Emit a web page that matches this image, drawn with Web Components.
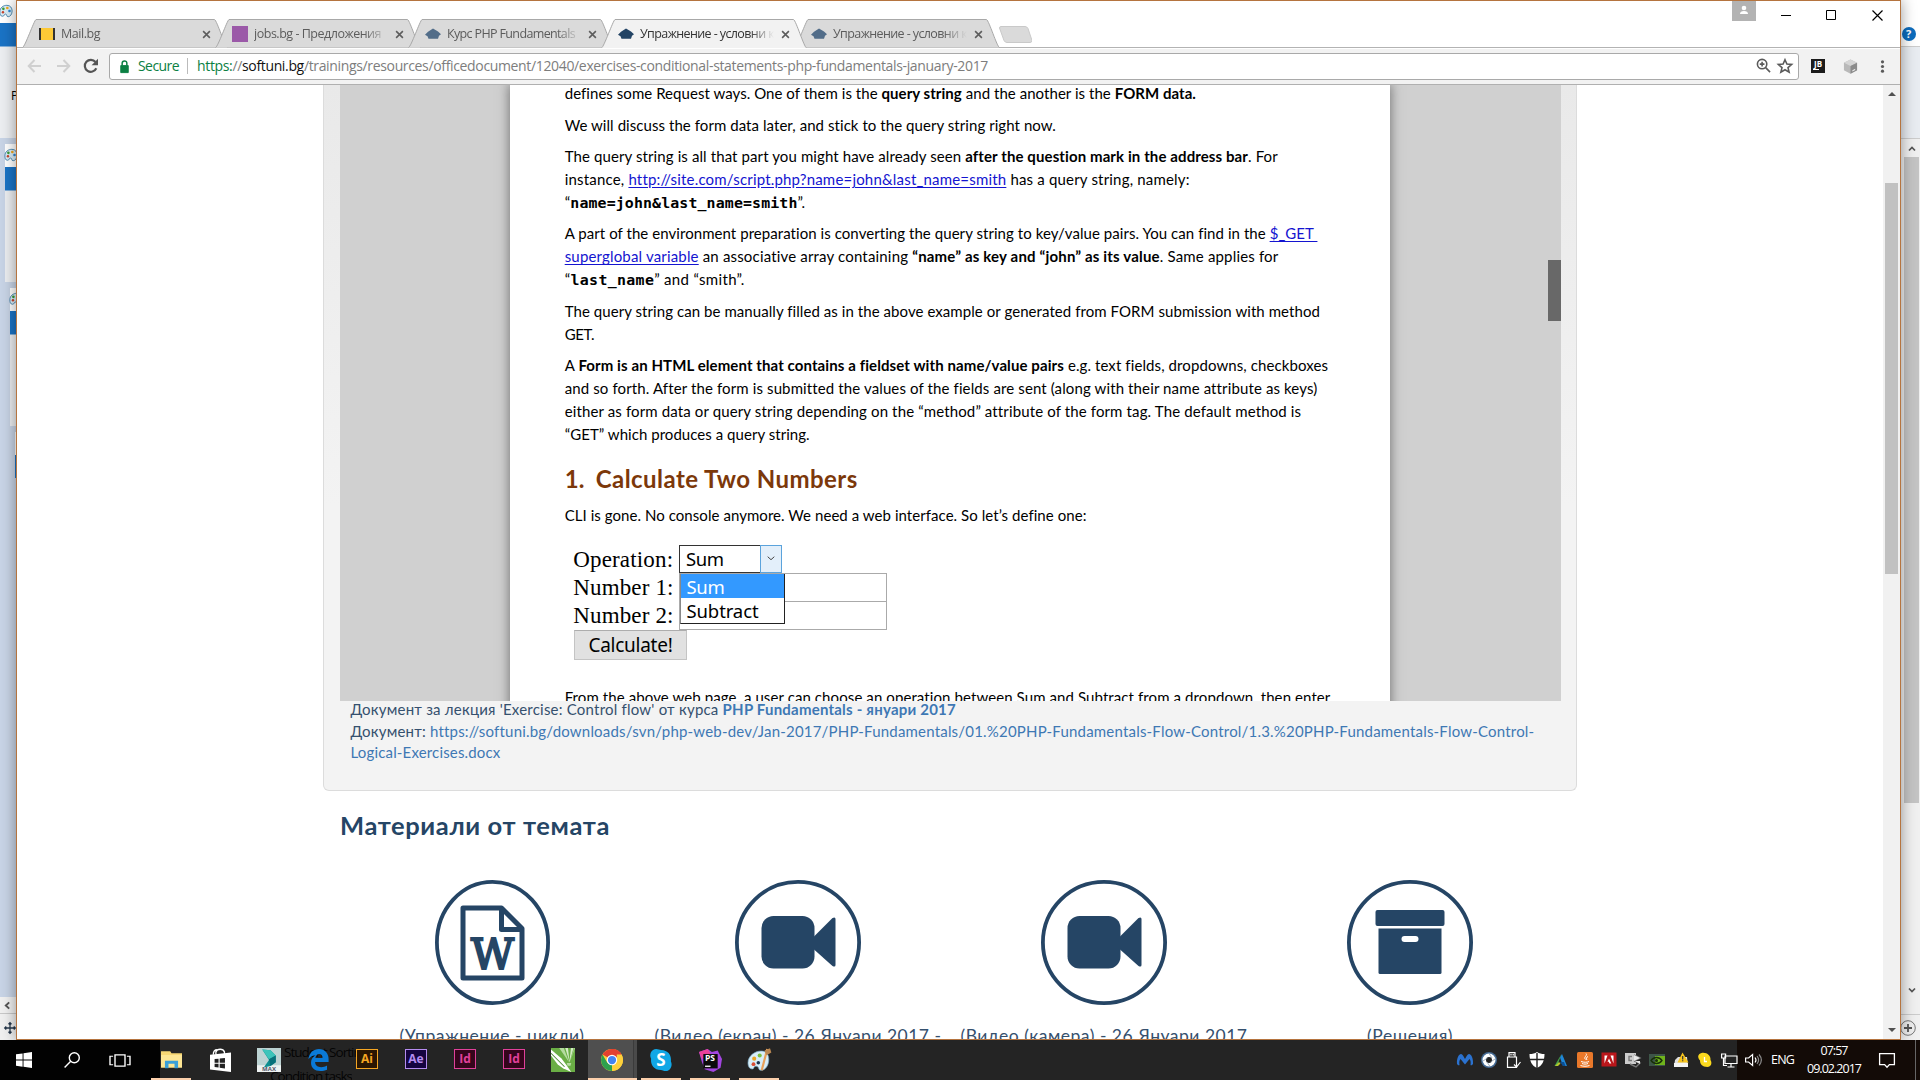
<!DOCTYPE html>
<html lang="bg">
<head>
<meta charset="utf-8">
<title>Упражнение - условни конструкции</title>
<style>
html,body{margin:0;width:1920px;height:1080px;overflow:hidden;background:#c3cfe2}
</style>
</head>
<body>
<desk-top></desk-top>
<script>
const define=(name,html,init)=>customElements.define(name,class extends HTMLElement{
  connectedCallback(){
    if(this.shadowRoot)return;
    const r=this.attachShadow({mode:'open'});
    r.innerHTML=typeof html==='function'?html(this):html;
    if(init)init(this,r);
  }
});

/* A single line of text whose tracking is adjusted to a given width. */
define('fit-line','<style>:host{display:block;white-space:pre}span{display:inline-block}</style><span><slot></slot></span>',(el,r)=>{
  const w=+el.getAttribute('w'),s=r.querySelector('span'),n=[...el.textContent].length;
  if(!w)return;
  const cur=s.getBoundingClientRect().width;
  s.style.letterSpacing=((w-cur)/n)+'px';
});

const P={
hat:'<path d="M8 2.500 13 5.500 16 8.200 14 9.800 13 12.800H3.500L2.500 10.300 0 8.800 3 5.800z"/>',
mail:'<rect width="16" height="12" y="2" fill="#fdc936"/><rect width="2" height="12" y="2" fill="#333"/><rect x="14" width="2" height="12" y="2" fill="#333"/>',
jobs:'<rect width="16" height="16" fill="#9b59a8"/>',
back:'<path d="M14 8H2M7.500 2 1.700 8l5.800 6" fill="none" stroke="#d0d0d0" stroke-width="2"/>',
fwd:'<path d="M2 8h12M8.500 2l5.800 6-5.800 6" fill="none" stroke="#d0d0d0" stroke-width="2"/>',
reload:'<path d="M13.300 10.300A6 6 0 1 1 12.500 4" fill="none" stroke="#555" stroke-width="2.200"/><path d="M15 .8v6.400H8.600z" fill="#555"/>',
lock:'<path d="M4 7h8v7.500H4z" fill="#0b8043" stroke="#0b8043" stroke-linejoin="round"/><path d="M5.500 7V4.500a2.500 2.500 0 0 1 5 0V7" fill="none" stroke="#0b8043" stroke-width="1.600"/>',
zoomin:'<g fill="none" stroke="#5a5a5a" stroke-width="1.700"><circle cx="6.500" cy="6.500" r="5"/><path d="m10.300 10.300 4.700 4.700M4 6.500h5M6.500 4v5" /></g>',
star:'<path d="m8 1.800 1.900 4.300 4.700.4-3.600 3.100 1.100 4.600L8 11.800l-4.100 2.400L5 9.600 1.400 6.500l4.700-.4z" fill="none" stroke="#5a5a5a" stroke-width="1.600"/>',
cube:'<path d="M8 .5 15 4v8l-7 3.800L1 12V4z" fill="#b9b9b9"/><path d="M8 .5 15 4 8 7.500 1 4z" fill="#d5d5d5"/><path d="M8 7.500 15 4v8l-7 3.800z" fill="#8b8b8b"/><path d="m10 12 3-1.500v1.200L10 13.200z" fill="#eee"/>',
dots:'<g fill="#5a5a5a"><circle cx="8" cy="3" r="1.700"/><circle cx="8" cy="8" r="1.700"/><circle cx="8" cy="13" r="1.700"/></g>',
palette:'<path d="M1 9C1 4 5 1.500 9 1.500s6 3 6 6.500-2 6.500-4.500 6.500-1-3-3-3-1 2.500-3.500 2.500S1 11.500 1 9z" fill="#d9edf7" stroke="#3f7fa8"/><circle cx="5" cy="5.500" r="1.500" fill="#3a9c3a"/><circle cx="9.500" cy="4.500" r="1.500" fill="#f0a81c"/><circle cx="4.500" cy="9.500" r="1.400" fill="#c9442c"/><circle cx="12" cy="8" r="1.500" fill="#2f86d0"/>',
start:'<path d="M0 2.300 6.600 1.400V7.600H0zM7.500 1.200 16 0v7.600H7.500zM0 8.500h6.600v6.200L0 13.800zM7.500 8.500H16V16l-8.500-1.200z" fill="#fff"/>',
search:'<g fill="none" stroke="#fff" stroke-width="1.400"><circle cx="10.300" cy="5.700" r="5"/><path d="M6.700 9.300.6 15.500"/></g>',
taskview:'<g fill="none" stroke="#fff" stroke-width="1.100"><path d="M4 2h8v12H4zM2.500 3.500H0v9h2.500M13.500 3.500H16v9h-2.500"/></g>',
explorer:'<path d="M0 1h7l1 1.500h8V14H0z" fill="#f7d774"/><path d="M0 4h16v10H0z" fill="#fde694"/><path d="M3 14.500V8.500h10v6h-2.700V11H5.700v3.500z" fill="#3aa0d8"/>',
store:'<path d="m0 4 16-1.500V16L0 14.200z" fill="#fff"/><path d="M4.500 4V2c1-2.500 5.500-2.500 6.500 0v1.500M2.500 4c0-2 1-3.500 3-3.500" fill="none" stroke="#fff"/><path d="m3.500 7 3-.3v2.800h-3zM7.400 6.600l4-.4v3.300h-4zM3.500 10.300h3v2.600l-3-.3zM7.400 10.300h4v3.300l-4-.5z" fill="#222"/>',
max:'<rect width="16" height="16" fill="#bcd3d3"/><rect y="11.500" width="16" height="4.500" fill="#eef2f2"/><path d="M3.500 1 9 1.500 12.500 5v4.500L9 12l-4.500 1L8 8z" fill="#0f8f90"/><path d="M3.500 1 9 1.500 12.500 5 8 7.500z" fill="#3cc4ba"/><path d="M8 7.500 12.500 5v4.500L9 12z" fill="#08707a"/>',
edge:'<path d="M.3 7.500C1 2.500 4.500 0 8.300 0 13 0 15.700 3.300 15.700 7.300v2.200H5.400c.2 2.800 2.200 3.700 4.600 3.700 1.700 0 3.200-.5 4.500-1.200v3C13 15.700 11.400 16 9.500 16 5 16 2.300 13.700 2.300 10c0-2.600 1.400-4.600 3.500-5.500C3.500 4.500 1.500 5.700.3 7.500zM5.600 6.600h5.500c0-2-1-3-2.600-3s-2.600 1.200-2.900 3z" fill="#0a7ad8"/>',
corel:'<rect width="16" height="16" fill="#6aae45"/><path d="M5.500 0h3L12 9.500zM15.500 0H16l-3.500 9.500z" fill="#b5dba0"/><path d="M9.500 0h5.500l-2.600 9.500z" fill="#d4ecc6"/><path d="M11.300 0h2l-1 9z" fill="#6aae45"/><path d="M10.500 10h3l-.5 1.800h-2z" fill="#b5dba0"/><path d="M0 1 7 7l3 4 3.500 5L8 13.500 4.500 11 0 5z" fill="#fff"/><path d="M0 3.500 9 12.500" stroke="#4b8a33" stroke-width=".7"/>',
chrome:'<circle cx="8" cy="8" r="8" fill="#fdd03b"/><path d="M8 8 1.100 4A8 8 0 0 1 14.900 4z" fill="#e3412f"/><path d="M8 0a8 8 0 0 1 6.900 4H8z" fill="#e3412f"/><path d="M1.100 4 4.600 10 8 11.500 8 16A8 8 0 0 1 1.100 4z" fill="#2da14d"/><path d="M14.900 4A8 8 0 0 1 8 16l3.500-6L11.500 4z" fill="#fdd03b"/><circle cx="8" cy="8" r="3.800" fill="#fff"/><circle cx="8" cy="8" r="3" fill="#4484f0"/>',
skype:'<path d="M4.500 0C6 0 7 .6 8 .8c5 0 7.800 3.800 7.200 8.200 1.500 3-.3 7-4 7-1.300 0-2.300-.7-3.200-.8C3 15.200.2 11.500.8 7-.8 4 1 0 4.500 0z" fill="#11a7e6"/>',
pstorm:'<path d="m0 2 6-2 3 2 4-1 3 6-1 6-5 3-6-2-2-5z" fill="#a345e0"/><path d="m0 2 6-2 2 3-6 4z" fill="#e8409a"/><path d="M3 3.500h10v10H3z" fill="#0b0b0b"/><path d="M4.200 12h3.800" stroke="#fff" stroke-width=".9"/>',
paint:'<path d="M0 10C0 5 5 1.500 9.500 1.500S15.500 5 15 9s-3 6.500-5.500 6.500-1-3-3.500-3-1 2-3 2S0 12.500 0 10z" fill="#d8eef8" stroke="#79a9c4" stroke-width=".5"/><circle cx="4.500" cy="7" r="1.500" fill="#e8a628"/><circle cx="8.500" cy="4.700" r="1.500" fill="#7fc13e"/><circle cx="4" cy="11" r="1.400" fill="#d84c34"/><circle cx="7.500" cy="10" r="1.300" fill="#1b3551"/><path d="M14 0 10 15.500" stroke="#e8a15a" stroke-width="1.600"/><path d="m12 1 4-1.500 1 3-3.500 2z" fill="#b98752"/>',
mb:'<path d="M0 12C-.5 6 2 2 4 2c1.500 0 3 3 4 5 1-2 2.500-5 4-5 2 0 4.500 4 4 10-1 1.500-2 1.500-2.500 1 .5-3 0-5-1-6L8 12.500 3.500 7c-1 1-1.500 3-1 6-.5.5-1.500.5-2.500-1z" fill="#2b72cf"/>',
shutter:'<circle cx="8" cy="8" r="8" fill="#456b94"/><circle cx="8" cy="8" r="6.500" fill="#fff"/><circle cx="8" cy="8" r="3" fill="#222"/><path d="M8 1.500 11 6M14 7 9.500 10M9 14.500 6 10M2 9l4.500-3" stroke="#89a" stroke-width=".8"/>',
usb:'<g fill="none" stroke="#fff" stroke-width="1.200"><path d="M4 5V.6h6V5M2.500 5h9v10.400h-9z"/><path d="M6 2v1.500M8.200 2v1.500"/><path d="m9 12.500 2.500 2.500 4-5"/></g>',
shield:'<path d="M8 0c2 1.500 4.500 2 7.500 2C15.500 9 13 14 8 16 3 14 .5 9 .5 2 3.500 2 6 1.500 8 0z" fill="#fff"/><path d="M8 1v15M1 7.500h14" stroke="#222" stroke-width="1.400"/>',
adesk:'<path d="M8.500 2 4 14H1.500z" fill="#46a84d"/><path d="M7 5.500 9 2l5 12h-4z" fill="#1f88d8"/><path d="M2 14l4-4 1.500 1.500L5 14z" fill="#b6c62b"/><path d="M7 10h4l1.500 4H10z" fill="#0b4f94"/>',
java:'<rect width="16" height="16" rx="1.500" fill="#e9782a"/><path d="M9 1.500c2 2-3 3.500-.5 6M11 4.500C9 5.500 9 6.500 10 8M4 9.500c3 1 6 1 8 0M5 11.500c2 .8 4 .8 6 0M3.500 13.500c3 1 6 1 9 0" fill="none" stroke="#fff"/>',
adobe:'<rect x=".5" y=".5" width="15" height="14" fill="#b9161b"/><path d="M3.500 3.500h3l-3 8zM9.500 3.500h3v8zM8 6.500l2.300 5H8.500L7.800 9.800H6.500z" fill="#fff"/>',
net1:'<rect y="1" width="11" height="11" fill="#ccc"/><path d="M7 4.500H4v4h3M9 3l6 3-6 3M9 9l6 2-4 4-6-3" fill="none" stroke="#777" stroke-width="1.400"/><path d="m9 3 6 3-6 3zM10 9h5v3z" fill="#e8e8e8"/>',
nvidia:'<rect y="2" width="16" height="12" fill="#3d5548"/><path d="M6 4h10v9H6z" fill="#70b41c"/><path d="M2 8.500c3-4 8-4 11 0-3 4-8 4-11 0z" fill="none" stroke="#183008" stroke-width="1.300"/><circle cx="7.500" cy="8.500" r="1.500" fill="#183008"/>',
warn:'<path d="m2 8 3-3h9l1 10H1z" fill="#dedede"/><path d="M1 11h14v4H1z" fill="#f4f4f4"/><path d="m9.500.5 6 10h-11z" fill="#f8c51d"/><path d="M9.700 4v3.500M9.700 8.300v1" stroke="#333" stroke-width="1.200"/>',
yskype:'<path d="M4.500 1C10 0 14 4 13.500 8c2 3 .5 7-3 7C5 15 3 12 3 8.500 0 5 1 2 4.500 1z" fill="#fbd91e"/><path d="M7.500 5v4.500H10" fill="none" stroke="#fff" stroke-width="1.300"/>',
ether:'<g fill="none" stroke="#fff" stroke-width="1.200"><path d="M4 4h12v7.500H4zM10 12v3M6.500 15h7M.6 2h4v4h-4zM2.500 6v7.500H6"/></g>',
vol:'<g fill="none" stroke="#fff" stroke-width="1.200"><path d="M.6 6h3l4-3.500v11L3.600 10h-3zM10 5.500c1.200 1.500 1.200 3.500 0 5"/><path d="M12 4c2 2.500 2 5.500 0 8M14 2.500c3 3.500 3 7.500 0 11" stroke="#8a8a8a"/></g>',
notif:'<path d="M.6 1.600h14.800v11h-5l-2.400 2.600-2.400-2.600h-5z" fill="none" stroke="#fff" stroke-width="1.300"/>',
move:'<path d="M8 1v14M1 8h14M6 3l2-2 2 2M6 13l2 2 2-2M3 6 1 8l2 2M13 6l2 2-2 2" fill="none" stroke="#24364a" stroke-width="1.700"/>',
left:'<path d="M11 2.500 5 8l6 5.500" fill="none" stroke="#555" stroke-width="3.400"/>',
up:'<path d="m2 11 6-6 6 6" fill="none" stroke="#555" stroke-width="3.500"/>',
down:'<path d="m2 5 6 6 6-6" fill="none" stroke="#555" stroke-width="3.500"/>',
help:'<circle cx="8" cy="8" r="8" fill="#0d6cbd"/>',
plus:'<circle cx="8" cy="8" r="7.300" fill="#eee" stroke="#777"/><path d="M8 4v8M4 8h8" stroke="#555" stroke-width="1.800"/>',
x:'<path d="m2 2 12 12M14 2 2 14" stroke="currentColor" stroke-width="2.800"/>'
};
define('ui-icon',el=>`<style>:host{display:block;flex:none;width:${el.getAttribute('s')||16}px;height:${el.getAttribute('h')||el.getAttribute('s')||16}px}svg{display:block;width:100%;height:100%;overflow:visible}</style><svg viewBox="0 0 16 16" preserveAspectRatio="none" fill="currentColor">${P[el.getAttribute('n')]}</svg>`);

define('chrome-tab',el=>{const a=el.hasAttribute('active');return `<style>
:host{display:grid;width:206px;height:29px;margin-right:-13px;flex:none;z-index:${a?2:1};color:${a?'#333':'#5c5c5c'}}
svg,.row{grid-area:1/1}
.row{display:flex;align-items:center;padding:1px 17.500px 0 17px;min-width:0}
.lab{margin-left:6px;width:135px;overflow:hidden;-webkit-mask-image:linear-gradient(90deg,#000 110px,transparent 134px);font:12.500px/20px "Open Sans","Noto Sans",sans-serif}
.cl{margin-left:auto;color:#5c5c5c}
</style><svg width="206" height="29"><path d="M.5 ${a?29:28.5} C3 28 12 1.500 14 .5H192.500C195 1.500 203 28 205.500 ${a?29:28.5}" fill="${a?'#f2f2f2':'#dadada'}" stroke="#a8a8a8"/></svg>
<div class="row"><ui-icon n="${el.getAttribute('icon')}" style="color:${a?'#234465':'#526d89'}"></ui-icon><div class="lab"><fit-line w="${el.getAttribute('w')}">${el.getAttribute('label')}</fit-line></div><ui-icon class="cl" n="x" s="9"></ui-icon></div>`});

define('tab-strip',`<style>:host{display:flex;height:48px;box-sizing:border-box;padding:18px 17px 0 5px;background:linear-gradient(#b3b3b3,#b3b3b3) 0 46px/100% 1px no-repeat #fff;align-items:flex-start}
.new{width:33px;height:17px;margin:7px 0 0 12px}
.win{margin-left:auto;display:flex;margin-top:-18px;align-items:flex-start}
.user{width:24px;height:20px;background:#b3b3b3;margin-right:25px}
svg{display:block}.b{margin-top:9px;width:11px;height:11px}</style>
<chrome-tab icon="mail" label="Mail.bg" w="39"></chrome-tab>
<chrome-tab icon="jobs" label="jobs.bg - Предложения" w="127"></chrome-tab>
<chrome-tab icon="hat" label="Курс PHP Fundamentals" w="128"></chrome-tab>
<chrome-tab active icon="hat" label="Упражнение - условни к" w="134"></chrome-tab>
<chrome-tab icon="hat" label="Упражнение - условни к" w="134"></chrome-tab>
<svg class="new" viewBox="0 0 33 17"><path d="M2 .5h24q2 0 3 2l4 12q0 2-2 2H8q-2 0-3-2L.5 2q0-1.500 1.500-1.500z" fill="#dadada" stroke="#c9c9c9"/></svg>
<div class="win"><svg class="user" viewBox="0 0 24 20"><circle cx="12" cy="7" r="2.300" fill="#fff"/><path d="M8 13q0-3 4-3t4 3z" fill="#fff"/></svg>
<svg class="b" style="margin-right:34px" viewBox="0 0 11 11"><path d="M0 5.500h10" stroke="#000"/></svg>
<svg class="b" style="margin-right:35px" viewBox="0 0 11 11"><path d="M.5.500h9v9h-9z" fill="none" stroke="#000"/></svg>
<svg class="b" viewBox="0 0 11 11"><path d="m.5.500 10 10M10.500.5l-10 10" stroke="#000" stroke-width="1.200"/></svg></div>`);

define('tool-bar',`<style>:host{display:flex;height:36px;box-sizing:border-box;background:#f2f2f2;border-bottom:1px solid #b0b0b0;align-items:center;padding:0 10px 1px 10px;font:14px/20px "Open Sans","Noto Sans",sans-serif;color:#7d7d7d}
.nav{display:flex;gap:12px;width:82px}
.box{width:1690px;height:27px;box-sizing:border-box;border:1px solid #a9a9a9;border-radius:3px;background:#fff;display:flex;align-items:center;padding:0 5px 0 7px;margin-right:12px}
.sec{color:#0b8043;margin-left:6px}.div{width:1px;height:16px;background:#bbb;margin:0 9px 0 8px}
.g{color:#0b8043}.k{color:#111}.r{margin-left:auto;display:flex;gap:6px}
.jb{width:14px;height:14px;background:#1c1c1c;color:#fff;font:bold 8px/9px "Open Sans";text-align:center;margin-right:18px}
.jb:after{content:"";display:block;width:6px;height:1px;background:#fff;margin:1px 0 0 2px}</style>
<div class="nav"><ui-icon n="back"></ui-icon><ui-icon n="fwd"></ui-icon><ui-icon n="reload"></ui-icon></div>
<div class="box"><ui-icon n="lock" s="15"></ui-icon><fit-line class="sec" w="41">Secure</fit-line><i class="div"></i><fit-line w="791"><span class="g">https:</span>//<span class="k">softuni.bg</span>/trainings/resources/officedocument/12040/exercises-conditional-statements-php-fundamentals-january-2017</fit-line>
<div class="r"><ui-icon n="zoomin" s="15"></ui-icon><ui-icon n="star"></ui-icon></div></div>
<div class="jb">JB</div><ui-icon n="cube" s="15"></ui-icon><ui-icon n="dots" s="15" style="margin-left:17px"></ui-icon>`);

define('form-shot',`<style>:host{display:block;position:relative;width:320px;margin:18.400px 0 0 9.300px;color:#000;font:23px/30px "Liberation Serif",serif}
.r{display:flex;height:28px}.r>fit-line{width:105.700px;margin-left:-.8px;margin-right:0}
.sel,.in,.btn{box-sizing:border-box;font:19px/28px "Noto Sans","Open Sans",sans-serif}
.sel{width:103.500px;height:28px;border:1px solid #333;display:flex;padding-left:6px;font-size:18.500px;line-height:26px}
.ar{width:20px;border:1px solid #5ba3dc;margin:-1px -1px -1px auto;background:#e3effa;display:grid;place-items:center}
.in{width:208px;height:29px;border:1px solid #aaa}
.btn{width:113px;height:30px;background:#e1e1e1;border:1px solid #c4c4c4;border-top-color:#adadad;margin-top:1px;padding-left:13.500px}
.pop{position:absolute;left:106.500px;top:29px;width:105px;height:50px;box-sizing:border-box;border:1px solid #222;border-top:0;border-left-color:#888;background:#fff;font:18.500px/25px "Noto Sans",sans-serif}
.pop div{padding-left:5px;height:24.500px}.pop .s{background:#3399ff;color:#fff}</style>
<div class="r"><fit-line w="100">Operation:</fit-line><div class="sel"><fit-line w="38">Sum</fit-line><div class="ar"><svg width="8" height="5"><path d="m.7.700 3.300 3 3.300-3" fill="none" stroke="#444"/></svg></div></div></div>
<div class="r"><fit-line w="100.500">Number 1:</fit-line><div class="in"></div></div>
<div class="r"><fit-line w="100.500">Number 2:</fit-line><div class="in"></div></div>
<div class="btn"><fit-line w="84">Calculate!</fit-line></div>
<div class="pop"><div class="s"><fit-line w="38">Sum</fit-line></div><div><fit-line w="72">Subtract</fit-line></div></div>`);

define('word-doc',`<style>:host{display:flex;position:relative;justify-content:center;width:1221px;height:616px;overflow:hidden;background:#d0d0d0;box-sizing:border-box;padding-right:1px}
.page{width:880px;height:700px;background:#fff;box-shadow:0 0 11px 1px #777;box-sizing:border-box;padding:0 0 0 54.700px;color:#000;font:15px/22.800px Lato,sans-serif}
p{margin:0 0 8.900px}.first{margin-top:-3.200px}
a{color:#1414d0;text-decoration:underline;text-underline-offset:2px}
code{font:bold 14.900px/10px "DejaVu Sans Mono",monospace}
h2{margin:18.600px 0 9.600px;font:bold 24px/30px Lato,sans-serif;color:#7c380a;display:flex}
.th{position:absolute;right:0;top:175px;width:13px;height:61px;background:#686868}</style>
<div class="page">
<p class="first"><fit-line w="631">defines some Request ways. One of them is the <b>query string</b> and the another is the <b>FORM data.</b></fit-line></p>
<p><fit-line w="491.500">We will discuss the form data later, and stick to the query string right now.</fit-line></p>
<p><fit-line w="713">The query string is all that part you might have already seen <b>after the question mark in the address bar</b>. For</fit-line><fit-line w="624.500">instance, <a>http://site.com/script.php?name=john&amp;last_name=smith</a> has a query string, namely:</fit-line><fit-line w="240.500">“<code>name=john&amp;last_name=smith</code>”.</fit-line></p>
<p><fit-line w="753">A part of the environment preparation is converting the query string to key/value pairs. You can find in the <a>$_GET </a></fit-line><fit-line w="714"><a>superglobal variable</a> an associative array containing <b>“name” as key and “john” as its value</b>. Same applies for</fit-line><fit-line w="180">“<code>last_name</code>” and “smith”.</fit-line></p>
<p><fit-line w="755">The query string can be manually filled as in the above example or generated from FORM submission with method</fit-line><fit-line w="29.500">GET.</fit-line></p>
<p style="margin:0"><fit-line w="763">A <b>Form is an HTML element that contains a fieldset with name/value pairs</b> e.g. text fields, dropdowns, checkboxes</fit-line><fit-line w="751">and so forth. After the form is submitted the values of the fields are sent (along with their name attribute as keys)</fit-line><fit-line w="736">either as form data or query string depending on the “method” attribute of the form tag. The default method is</fit-line><fit-line w="245">“GET” which produces a query string.</fit-line></p>
<h2><fit-line w="20" style="width:31px">1.</fit-line><fit-line w="262">Calculate Two Numbers</fit-line></h2>
<p style="margin:0"><fit-line w="521.500">CLI is gone. No console anymore. We need a web interface. So let’s define one:</fit-line></p>
<form-shot></form-shot>
<p style="margin-top:26px"><fit-line w="766">From the above web page, a user can choose an operation between Sum and Subtract from a dropdown, then enter</fit-line></p>
</div><div class="th"></div>`);

const M={
doc:'<path d="M-29.500-34.500H9L29.500-14V35.500h-59zM9-34.500V-13h20.500" fill="none" stroke="#254565" stroke-width="5" stroke-linejoin="round"/><text x="-21.500" y="26" textLength="43" lengthAdjust="spacingAndGlyphs" font-family="DejaVu Serif" font-size="43" fill="#254565" stroke="#254565" stroke-width="2.200">W</text>',
cam:'<rect x="-36.500" y="-26.500" width="53" height="52.500" rx="12" fill="#254565"/><path d="M16-6 34.500-24.500q3-1.500 3 1v46q0 2.500-3 1L16 7z" fill="#254565"/>',
box:'<g fill="#254565"><rect x="-34.500" y="-32.500" width="69" height="16" rx="2"/><path d="M-31.500-14h63v44q0 1.500-1.500 1.500h-60q-1.500 0-1.500-1.500z"/></g><rect x="-8.500" y="-6.500" width="17" height="6" rx="3" fill="#fff"/>'
};
define('material-item',el=>{const w=+el.getAttribute('cw');return `<style>:host{display:flex;flex-direction:column;align-items:center;width:306px;color:#35506e;font:17.500px/24px Lato,sans-serif}svg{display:block;overflow:visible;margin-bottom:18.500px}</style>
<svg width="${w}" height="125" viewBox="${-w/2} -62.500 ${w} 125"><ellipse rx="${w/2-1.9}" ry="60.600" fill="none" stroke="#254565" stroke-width="3.800"/>${M[el.getAttribute('n')]}</svg><fit-line w="${el.getAttribute('w')}">${el.getAttribute('label')}</fit-line>`});

define('web-page',`<style>:host{display:flex;height:955px;overflow:hidden;background:#fff;color:#35506e}
.main{flex:1;min-width:0;padding-left:306px}
.well{width:1254px;height:706px;box-sizing:border-box;border:1px solid #dcdcdc;border-top:0;border-radius:0 0 6px 6px;background:linear-gradient(#e9e9e9,#f3f3f3 420px);padding-left:16px}
.cap{padding:0 0 0 10.500px;margin-top:-1.600px;font:15px/21.500px Lato,sans-serif}
.cap b,.cap a{color:#3e78b4}
h1{margin:18px 0 39px 17px;font:bold 25.500px/32px Lato,sans-serif;color:#254565}
.items{display:flex;margin-left:16px}
.sb{width:17px;background:#f1f1f1;display:flex;flex-direction:column;align-items:center}
.sb i{width:13px;height:391px;background:#c1c1c1;margin:87px 0 auto}
svg{display:block}</style>
<div class="main"><div class="well"><word-doc></word-doc>
<div class="cap"><fit-line w="605.500">Документ за лекция 'Exercise: Control flow' от курса <b>PHP Fundamentals - януари 2017</b></fit-line><fit-line w="1183">Документ: <a>https://softuni.bg/downloads/svn/php-web-dev/Jan-2017/PHP-Fundamentals/01.%20PHP-Fundamentals-Flow-Control/1.3.%20PHP-Fundamentals-Flow-Control-</a></fit-line><fit-line w="150"><a>Logical-Exercises.docx</a></fit-line></div></div>
<h1><fit-line w="270">Материали от темата</fit-line></h1>
<div class="items"><material-item n="doc" cw="115" w="185" label="(Упражнение - цикли)"></material-item><material-item n="cam" cw="126" w="287" label="(Видео (екран) - 26 Януари 2017 -"></material-item><material-item n="cam" cw="126" w="287" label="(Видео (камера) - 26 Януари 2017"></material-item><material-item n="box" cw="126" w="86" label="(Решения)"></material-item></div></div>
<div class="sb"><svg width="8" height="4" style="margin-top:7px"><path d="M0 4 4 0l4 4z" fill="#505050"/></svg><i></i><svg width="8" height="4" style="margin-bottom:8px"><path d="m0 0 4 4 4-4z" fill="#505050"/></svg></div>`);

define('browser-window',`<style>:host{display:block;position:absolute;left:16px;top:0;width:1885px;height:1040px;box-sizing:border-box;border:1px solid #b5743f;box-shadow:0 0 14px rgba(0,0,0,.4);background:#fff;overflow:hidden}</style>
<tab-strip></tab-strip><tool-bar></tool-bar><web-page></web-page>`);

define('back-windows',`<style>:host{display:flex;justify-content:space-between;height:1040px}
.l{width:18px;position:relative;background:#c8d4e6;overflow:hidden}
.w{position:absolute;width:30px;height:138px;background:linear-gradient(#fff 23px,#1a73c5 23px 46px,#eceef1 47px)}
.w ui-icon{margin:4px 0 0 -1px}
.bot{position:absolute;top:997px;left:0;width:18px;height:43px;background:#f0f0f0;display:flex;flex-direction:column}
.bot div{height:17px;border-bottom:1px solid #c8c8c8;box-sizing:border-box}
.r{width:20px;background:#f0f0f0;display:flex;flex-direction:column;align-items:center}
.rt{height:46px;width:100%;background:#fff;border-bottom:1px solid #ccc;display:grid;position:relative}
.rt>*{grid-area:1/1;margin:27px 0 0 2px}.rt b{color:#fff;font:bold 11px/14px "Open Sans";margin-left:6px}
.rm{height:91px;width:100%;background:#e8ecf1;border-bottom:1px solid #ccc}
.th{width:15px;height:646px;background:#c4c4c4;margin:4px 0 auto 3px}
.pl{border-top:1px solid #ccc;padding:5px 6px 4px 0;margin-top:20px;width:14px}
.f{position:absolute;left:11px;top:88px;font:12px/16px "Open Sans"}</style>
<div class="l"><div class="w" style="left:0;top:0"><ui-icon n="palette" s="14"></ui-icon></div><span class="f">P</span>
<div class="w" style="left:5px;top:144px"><ui-icon n="palette" s="14"></ui-icon></div>
<div class="w" style="left:10px;top:288px"><ui-icon n="palette" s="14"></ui-icon></div>
<div class="w" style="left:15px;top:432px;height:46px"></div>
<div class="bot"><div><ui-icon n="left" s="9" style="margin:4px 0 0 3px"></ui-icon></div><ui-icon n="move" s="12" style="margin:8px 0 0 3.500px"></ui-icon></div></div>
<div class="r"><div class="rt"><ui-icon n="help" s="14"></ui-icon><b>?</b></div><div class="rm"></div><ui-icon n="up" s="8" style="margin:6px 0 0 3px"></ui-icon><div class="th"></div><ui-icon n="down" s="8" style="margin:0 0 0 3px"></ui-icon><div class="pl"><ui-icon n="plus" s="16"></ui-icon></div></div>`);

define('adobe-tile',el=>{const c=el.getAttribute('c');return `<style>:host{display:grid;place-items:center;box-sizing:border-box;width:22px;height:20px;border:1.500px solid ${c};background:${el.getAttribute('bg')};color:${c};font:bold 12px/16px "Open Sans",sans-serif;margin-bottom:3px}</style><slot></slot>`});
define('task-slot',el=>{const on=el.hasAttribute('on'),a=el.hasAttribute('act');return `<style>:host{display:grid;place-items:center;width:49px;height:40px;box-sizing:border-box;flex:none;background:${on?'linear-gradient(#fcd0ac,#fcd0ac) 50% 100%/'+(a?'49px':'40px')+' 2px no-repeat':'none'}${a?',linear-gradient(90deg,#4f4f4f 45px,#2c2c2c 45px,#4a4a4a 46px)':''}}</style><slot></slot>`});
define('task-bar',`<style>:host{display:flex;height:40px;position:relative;background:linear-gradient(90deg,#020202 160px,#242424 160px 1737px,#130b07 1737px);color:#fff;font:12.500px/18px "Open Sans","Noto Sans",sans-serif}
.st{display:flex;width:146.500px}.st task-slot{width:48px}
.tray{position:absolute;right:4px;top:0;height:40px;display:flex;align-items:center;border-right:1px solid #666;padding-right:20px}
.tray ui-icon{margin-right:8px}
.clock{display:flex;flex-direction:column;align-items:center;margin:0 18px 0 13px}
.g{position:absolute;left:284px;top:3px;color:#050505;font-size:13.500px;z-index:0}.g2{left:270px;top:27px;height:13px;overflow:hidden}
task-slot{z-index:1}.n{display:grid}.n>*{grid-area:1/1;place-self:center}.n b{font:bold 17px/20px "Open Sans"}.n .ps{font:bold 8.500px/10px "Open Sans";margin-top:-5px}
.n .mx{font:bold 6px/6px "Open Sans";color:#556;align-self:end}</style>
<fit-line class="g" w="74">Student Sortir</fit-line><fit-line class="g g2" w="82">Condition tasks</fit-line>
<div class="st"><task-slot><ui-icon n="start"></ui-icon></task-slot><task-slot><ui-icon n="search"></ui-icon></task-slot><task-slot><ui-icon n="taskview" s="20" h="15"></ui-icon></task-slot></div>
<task-slot on><ui-icon n="explorer" s="21" h="20"></ui-icon></task-slot>
<task-slot><ui-icon n="store" s="21" h="23"></ui-icon></task-slot>
<task-slot><div class="n"><ui-icon n="max" s="24"></ui-icon><b class="mx">MAX</b></div></task-slot>
<task-slot><ui-icon n="edge" s="21" h="22"></ui-icon></task-slot>
<task-slot><adobe-tile c="#f5a623" bg="#2a1602">Ai</adobe-tile></task-slot>
<task-slot><adobe-tile c="#b58cf0" bg="#160440">Ae</adobe-tile></task-slot>
<task-slot><adobe-tile c="#e0409a" bg="#35051c">Id</adobe-tile></task-slot>
<task-slot><adobe-tile c="#e0409a" bg="#35051c">Id</adobe-tile></task-slot>
<task-slot><ui-icon n="corel" s="24"></ui-icon></task-slot>
<task-slot on act><ui-icon n="chrome" s="22"></ui-icon></task-slot>
<task-slot on><div class="n"><ui-icon n="skype" s="22"></ui-icon><b>S</b></div></task-slot>
<task-slot on><div class="n"><ui-icon n="pstorm" s="23"></ui-icon><b class="ps">PS</b></div></task-slot>
<task-slot on><ui-icon n="paint" s="22"></ui-icon></task-slot>
<div class="tray"><ui-icon n="mb"></ui-icon><ui-icon n="shutter"></ui-icon><ui-icon n="usb"></ui-icon><ui-icon n="shield"></ui-icon><ui-icon n="adesk"></ui-icon><ui-icon n="java"></ui-icon><ui-icon n="adobe"></ui-icon><ui-icon n="net1"></ui-icon><ui-icon n="nvidia"></ui-icon><ui-icon n="warn"></ui-icon><ui-icon n="yskype"></ui-icon><ui-icon n="ether"></ui-icon><ui-icon n="vol" style="margin-right:10px"></ui-icon><fit-line w="23">ENG</fit-line><div class="clock"><fit-line w="27">07:57</fit-line><fit-line w="54">09.02.2017</fit-line></div><ui-icon n="notif" style="margin:0"></ui-icon></div>`);

define('desk-top','<style>:host{display:block;position:relative;width:1920px;height:1080px;overflow:hidden}</style><back-windows></back-windows><browser-window></browser-window><task-bar></task-bar>');
</script>
</body>
</html>
